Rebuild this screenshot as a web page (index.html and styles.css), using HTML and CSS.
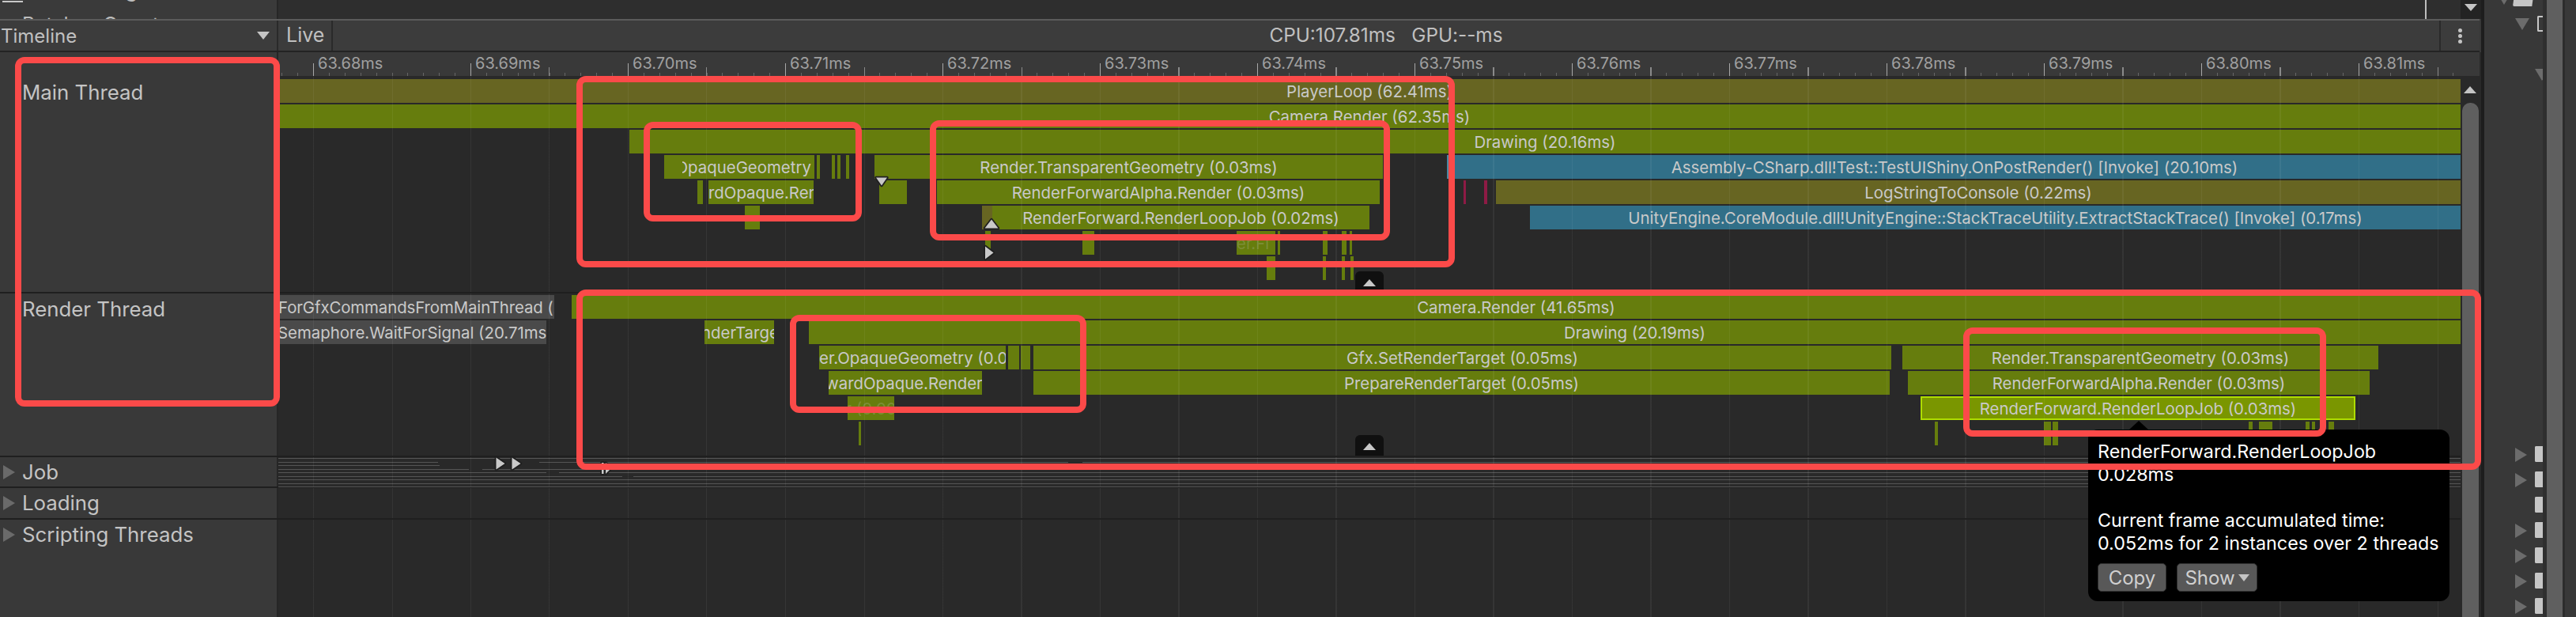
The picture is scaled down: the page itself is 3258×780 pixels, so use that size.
FILE: index.html
```html
<!DOCTYPE html>
<html lang="en">
<head>
<meta charset="utf-8">
<title>Profiler Timeline</title>
<link rel="stylesheet" href="styles.css">
</head>
<body>
<div class="app">
  <div class="editor">
    <div class="strip">
      <div class="strip-left">
        <div class="stat-row first"><span class="stat-icon"></span><span class="stat-name">Rendering</span></div>
        <div class="stat-row second"><span>Batches Count</span></div>
      </div>
      <div class="strip-graph"><span class="playhead"></span></div>
      <div class="strip-scroll"><span class="tri tri-down"></span></div>
    </div>
    <div class="toolbar">
      <div class="view-select"><span>Timeline</span><span class="tri tri-down"></span></div>
      <div class="live">Live</div>
      <div class="stats">CPU:107.81ms&nbsp;&nbsp;&nbsp;GPU:--ms</div>
      <div class="more"><i></i><i></i><i></i></div>
    </div>
    <div class="body">
      <div class="timeline">
        <div class="ruler-row">
          <div class="label-blank"></div>
          <div class="ruler">
            <span>63.68ms</span><span>63.69ms</span><span>63.70ms</span><span>63.71ms</span><span>63.72ms</span><span>63.73ms</span><span>63.74ms</span><span>63.75ms</span><span>63.76ms</span><span>63.77ms</span><span>63.78ms</span><span>63.79ms</span><span>63.80ms</span><span>63.81ms</span>
          </div>
        </div>

        <div class="section main-thread">
          <div class="label"><span>Main Thread</span></div>
          <div class="lanes">
            <div class="lane">
              <div class="bar o" style="left:0;width:2760px">PlayerLoop (62.41ms)</div>
            </div>
            <div class="lane">
              <div class="bar g" style="left:0;width:2760px">Camera.Render (62.35ms)</div>
            </div>
            <div class="lane">
              <div class="bar g" style="left:444px;width:2316px">Drawing (20.16ms)</div>
            </div>
            <div class="lane">
              <div class="bar g" style="left:488px;width:190px"><span class="cut" style="margin-left:18px;width:163px"><span style="margin-left:-8px">OpaqueGeometry</span></span></div>
              <div class="bar g" style="left:681px;width:4px"></div>
              <div class="bar g" style="left:700px;width:4px"></div>
              <div class="bar g" style="left:707px;width:4px"></div>
              <div class="bar g" style="left:718px;width:4px"></div>
              <div class="bar g" style="left:754px;width:643px">Render.TransparentGeometry (0.03ms)</div>
              <div class="bar b edge" style="left:1478px;width:1282px">Assembly-CSharp.dll!Test::TestUIShiny.OnPostRender() [Invoke] (20.10ms)</div>
            </div>
            <div class="lane">
              <div class="bar g" style="left:530px;width:7px"></div>
              <div class="bar g start" style="left:544px;width:133px">rdOpaque.Render</div>
              <div class="bar g" style="left:760px;width:35px"></div>
              <div class="bar g" style="left:833px;width:560px">RenderForwardAlpha.Render (0.03ms)</div>
              <div class="bar r" style="left:1499px;width:3px"></div>
              <div class="bar r" style="left:1525px;width:4px"></div>
              <div class="bar o" style="left:1540px;width:1220px">LogStringToConsole (0.22ms)</div>
            </div>
            <div class="lane">
              <div class="bar g" style="left:590px;width:19px"></div>
              <div class="bar o" style="left:890px;width:13px"></div>
              <div class="bar g" style="left:903px;width:477px">RenderForward.RenderLoopJob (0.02ms)</div>
              <div class="bar b" style="left:1583px;width:1177px">UnityEngine.CoreModule.dll!UnityEngine::StackTraceUtility.ExtractStackTrace() [Invoke] (0.17ms)</div>
            </div>
            <div class="lane">
              <div class="bar g" style="left:894px;width:7px"></div>
              <div class="bar g" style="left:1017px;width:15px"></div>
              <div class="bar g dim start" style="left:1212px;width:49px"><span>er.Fl</span></div>
              <div class="bar g" style="left:1264px;width:3px"></div>
              <div class="bar g" style="left:1321px;width:6px"></div>
              <div class="bar g" style="left:1345px;width:6px"></div>
              <div class="bar g" style="left:1355px;width:3px"></div>
            </div>
            <div class="lane">
              <div class="bar g" style="left:1250px;width:11px"></div>
              <div class="bar g" style="left:1321px;width:4px"></div>
              <div class="bar g" style="left:1345px;width:4px"></div>
              <div class="bar g" style="left:1356px;width:4px"></div>
            </div>
            <div class="expand"></div>
          </div>
        </div>

        <div class="section render-thread">
          <div class="label"><span>Render Thread</span></div>
          <div class="lanes">
            <div class="lane">
              <div class="bar k start tight" style="left:0;width:349px">ForGfxCommandsFromMainThread (20.71ms)</div>
              <div class="bar g" style="left:371px;width:2389px">Camera.Render (41.65ms)</div>
            </div>
            <div class="lane">
              <div class="bar k start" style="left:0;width:339px"><span class="nudge">Semaphore.WaitForSignal (20.71ms)</span></div>
              <div class="bar g start" style="left:539px;width:88px"><span class="shift">nderTarget</span></div>
              <div class="bar g" style="left:671px;width:2089px">Drawing (20.19ms)</div>
            </div>
            <div class="lane">
              <div class="bar g start" style="left:684px;width:236px">er.OpaqueGeometry (0.05ms)</div>
              <div class="bar g" style="left:923px;width:14px"></div>
              <div class="bar g" style="left:939px;width:12px"></div>
              <div class="bar g" style="left:955px;width:1085px">Gfx.SetRenderTarget (0.05ms)</div>
              <div class="bar g" style="left:2054px;width:602px">Render.TransparentGeometry (0.03ms)</div>
            </div>
            <div class="lane">
              <div class="bar g start" style="left:696px;width:194px"><span class="shift">wardOpaque.Render</span></div>
              <div class="bar g" style="left:955px;width:1083px">PrepareRenderTarget (0.05ms)</div>
              <div class="bar g" style="left:2061px;width:584px">RenderForwardAlpha.Render (0.03ms)</div>
            </div>
            <div class="lane">
              <div class="bar g dim" style="left:720px;width:59px"><span>r (0.00</span></div>
              <div class="bar hi" style="left:2077px;width:550px">RenderForward.RenderLoopJob (0.03ms)</div>
            </div>
            <div class="lane">
              <div class="bar g" style="left:734px;width:3px"></div>
              <div class="bar g" style="left:2095px;width:4px"></div>
              <div class="bar g" style="left:2233px;width:9px"></div>
              <div class="bar g" style="left:2244px;width:7px"></div>
              <div class="bar g" style="left:2492px;width:5px"></div>
              <div class="bar g" style="left:2505px;width:17px"></div>
              <div class="bar g" style="left:2564px;width:5px"></div>
              <div class="bar g" style="left:2572px;width:4px"></div>
              <div class="bar g" style="left:2593px;width:7px"></div>
            </div>
            <div class="expand"></div>
          </div>
        </div>

        <div class="section job">
          <div class="label fold"><i class="tri-right"></i><span>Job</span></div>
          <div class="lanes job-lines">
            <div class="job-line"></div>
            <div class="job-line"><i style="left:202px;width:128px"></i><i style="left:999px;width:18px"></i></div>
            <div class="job-line"><i style="left:204px;width:244px"></i></div>
            <div class="job-line"><i style="left:241px;width:17px"></i></div>
            <div class="job-line"><i style="left:339px;width:16px"></i></div>
            <div class="job-line"><i style="left:435px;width:14px"></i></div>
            <div class="job-line"></div>
            <div class="job-line"></div>
            <div class="job-line"></div>
          </div>
        </div>

        <div class="section loading">
          <div class="label fold"><i class="tri-right"></i><span>Loading</span></div>
          <div class="lanes"></div>
        </div>

        <div class="section scripting">
          <div class="label fold"><i class="tri-right"></i><span>Scripting Threads</span></div>
          <div class="lanes"></div>
        </div>
      </div>
      <div class="vscroll">
        <div class="vscroll-cap"></div>
        <div class="vscroll-arrow"><span class="tri tri-up"></span></div>
        <div class="thumb"></div>
      </div>
    </div>
  </div>

  <div class="gutter"></div>
  <div class="tree">
    <div class="tree-row d0"><i class="tree-tri down"></i><i class="folder"></i></div>
    <div class="tree-row d1"><i class="tree-tri down"></i><i class="doc"></i></div>
    <div class="tree-row"></div>
    <div class="tree-row d2"><i class="tree-tri down"></i></div>
    <div class="tree-space"></div>
    <div class="tree-row d1"><i class="tree-tri"></i><i class="doc solid"></i></div>
    <div class="tree-row d1"><i class="tree-tri"></i><i class="doc solid"></i></div>
    <div class="tree-row d1"><i class="tree-tri none"></i><i class="doc solid"></i></div>
    <div class="tree-row d1"><i class="tree-tri"></i><i class="doc solid"></i></div>
    <div class="tree-row d1"><i class="tree-tri"></i><i class="doc solid"></i></div>
    <div class="tree-row d1"><i class="tree-tri"></i><i class="doc solid"></i></div>
    <div class="tree-row d1"><i class="tree-tri"></i><i class="doc solid"></i></div>
  </div>
  <div class="tree-edge"></div>
  <div class="panel-scroll"></div>
  <div class="panel-rest"></div>

  <svg class="mark mark-down" style="left:1105px;top:222px" viewBox="0 0 20 15"><path d="M3 2.500H17L10 12.500Z"/></svg>
  <svg class="mark mark-up" style="left:1243px;top:275px" viewBox="0 0 22 16"><path d="M11 2.500L19.500 13.500H2.500Z"/></svg>
  <svg class="mark mark-right" style="left:1243px;top:309px" viewBox="0 0 16 21"><path d="M3 2.500L13.500 10.500L3 18.500Z"/></svg>
  <svg class="mark mark-job" style="left:625px;top:577px" viewBox="0 0 15 18"><path d="M2.500 1.500L13.500 9L2.500 16.500Z"/></svg>
  <svg class="mark mark-job" style="left:645px;top:577px" viewBox="0 0 15 18"><path d="M2.500 1.500L13.500 9L2.500 16.500Z"/></svg>
  <svg class="mark mark-pair" style="left:758px;top:582px" viewBox="0 0 17 20"><path d="M8 3L15 10L8 17Z"/><path d="M3 3H5.500V17H3Z"/></svg>

  <div class="tooltip">
    <i class="tooltip-arrow"></i>
    <div class="tooltip-text">RenderForward.RenderLoopJob<br>0.028ms<br><br>Current frame accumulated time:<br>0.052ms for 2 instances over 2 threads</div>
    <div class="tooltip-actions">
      <button class="tip-btn">Copy</button>
      <button class="tip-btn show">Show<span class="tri tri-down"></span></button>
    </div>
  </div>

  <div class="note note-labels"></div>
  <div class="note note-main"></div>
  <div class="note note-main-opaque"></div>
  <div class="note note-main-trans"></div>
  <div class="note note-render"></div>
  <div class="note note-render-opaque"></div>
  <div class="note note-render-trans"></div>
</div>
</body>
</html>
```

FILE: styles.css
```css
* { box-sizing: border-box; }
html, body { margin: 0; padding: 0; background: #383838; }
body { font-family: Inter, "Noto Sans", sans-serif; color: #c6c6c6; font-size: 25px; }

.app { position: relative; display: flex; width: 3258px; height: 780px; overflow: hidden; }
.editor { width: 3138px; height: 780px; display: flex; flex-direction: column; flex: none; }

.tri { display: block; width: 0; height: 0; border-style: solid; border-color: transparent; }
.tri-down { border-width: 9px 8px 0 8px; border-top-color: #c4c4c4; }
.tri-up { border-width: 0 8px 9px 8px; border-bottom-color: #c4c4c4; }

/* top strip */
.strip { height: 24px; display: flex; flex: none; overflow: hidden; }
.strip-left { width: 350px; background: #3a3a3a; flex: none; overflow: hidden; color: #bdbdbd; }
.stat-row { display: flex; height: 30px; line-height: 30px; white-space: nowrap; }
.stat-row.first { margin-top: -27px; }
.stat-row.second { margin-top: 13px; padding-left: 28px; }
.stat-icon { width: 26px; margin-left: 3px; border-bottom: 2px solid #c8c8c8; }
.stat-name { margin-left: 24px; }
.strip-graph { flex: 1; background: #2e2e2e; border-left: 2px solid #262626; position: relative; }
.playhead { position: absolute; left: 2715px; top: 0; bottom: 0; width: 2px; background: #bdbdbd; }
.strip-scroll { width: 26px; background: #232323; flex: none; display: flex; justify-content: center; padding-top: 5px; }

/* toolbar */
.toolbar { height: 42px; flex: none; display: flex; background: #3c3c3c; border-top: 2px solid #5b5b5b; border-bottom: 2px solid #232323; margin-right: 2px; }
.view-select { width: 350px; flex: none; display: flex; justify-content: space-between; align-items: center; padding: 0 9px 0 1px; color: #c0c0c0; font-size: 24px; }
.view-select .tri { border-width: 10px 8px 0 8px; }
.live { width: 71px; flex: none; border-left: 2px solid #2a2a2a; border-right: 2px solid #2a2a2a; padding-left: 10px; line-height: 36px; color: #c0c0c0; }
.stats { flex: 1; text-align: center; line-height: 36px; color: #c0c0c0; font-size: 24.300px; }
.more { width: 51px; flex: none; border-left: 2px solid #2a2a2a; display: flex; flex-direction: column; align-items: center; justify-content: center; gap: 2px; }
.more i { width: 5px; height: 5px; border-radius: 50%; background: #c4c4c4; }

/* body */
.body { flex: 1; display: flex; min-height: 0; }
.timeline { width: 3112px; flex: none; display: flex; flex-direction: column; }
.ruler-row { height: 30px; flex: none; display: flex; }
.label-blank { width: 352px; flex: none; background: #393939; border-right: 2px solid #262626; }
.ruler {
  flex: 1; display: flex; padding-left: 50px; background-color: #393939; border-right: 2px solid #262626;
  background-image:
    repeating-linear-gradient(to right, #a8a8a8 44px 45px, transparent 45px 243px),
    repeating-linear-gradient(to right, #8a8a8a 143.5px 144.5px, transparent 144.5px 342.5px),
    repeating-linear-gradient(to right, #666 4.200px 5.200px, transparent 5.200px 24.100px);
  background-size: 100% 16px, 100% 11px, 100% 4px;
  background-position: 0 100%, 0 100%, 0 100%;
  background-repeat: no-repeat;
  font-size: 20px; color: #a0a0a0; line-height: 30px;
}
.ruler span { width: 199px; flex: none; height: 26px; line-height: 28px; }

.section { display: flex; flex: none; border-bottom: 2px solid #1f1f1f; }
.main-thread { height: 275px; }
.render-thread { height: 207px; }
.job { height: 39px; }
.loading { height: 40px; }
.scripting { flex: 1; border-bottom: 0; }
.label { width: 352px; flex: none; background: #393939; border-right: 2px solid #262626; padding-left: 28px; color: #c4c4c4; position: relative; font-size: 25.800px; }
.main-thread .label span { display: block; margin-top: 6px; line-height: 30px; }
.render-thread .label span { display: block; margin-top: 5px; line-height: 30px; }
.fold span { display: block; line-height: 38px; }
.tri-right { position: absolute; left: 4px; top: 10px; width: 0; height: 0; border-style: solid; border-color: transparent transparent transparent #6a6a6a; border-width: 9px 0 9px 15px; }

.lanes { position: relative; flex: 1; background: #292929; display: flex; flex-direction: column; gap: 2px; }
.lanes::after {
  content: ""; position: absolute; inset: 0; pointer-events: none;
  background-image: repeating-linear-gradient(to right, rgba(255,255,255,.055) 44px 45px, transparent 45px 143.500px);
}
.main-thread .lanes { padding-top: 4px; }
.render-thread .lanes { padding-top: 2px; }
.lane { position: relative; height: 30px; flex: none; }

.bar { position: absolute; top: 0; bottom: 0; display: flex; align-items: center; justify-content: center; overflow: hidden; white-space: nowrap; font-size: 20.400px; color: #c9c9c9; }
.bar.start { justify-content: flex-start; }
.g { background: #667d0d; }
.o { background: #676522; }
.b { background: #316f88; }
.r { background: #8e1b45; }
.k { background: #4a4a4a; }
.edge { border-left: 2px solid #4a87a0; }
.hi { background: #7a9600; border: 2px solid #aedc00; }
.dim { color: rgba(205,205,205,.22); }
.tight { letter-spacing: -.1px; }
.cut { display: block; overflow: hidden; flex: none; align-self: center; }
.cut span { display: block; }
.shift { margin-left: -4px; }
.nudge { margin-left: -1px; }

.expand { position: absolute; left: 1362px; bottom: 0; width: 36px; height: 26px; background: #101010; border-radius: 6px 6px 0 0; }
.expand::after { content: ""; position: absolute; left: 10px; top: 10px; border-style: solid; border-color: transparent transparent #c8c8c8 transparent; border-width: 0 8px 9px 8px; }

/* job lines */
.job-lines { gap: 3.500px; padding-top: 1px; }
.job-line { position: relative; height: 1px; background: #555; flex: none; }
.job-line i { position: absolute; top: 0; height: 1px; background: #292929; }

/* scrollbar */
.vscroll { width: 26px; flex: none; background: #292929; position: relative; }
.vscroll-cap { height: 30px; width: 24px; background: #393939; }
.vscroll-arrow { height: 34px; display: flex; justify-content: center; padding-top: 13px; padding-right: 2px; }
.thumb { width: 21px; margin-left: 2px; height: 700px; border-radius: 10px 10px 0 0; background: #5f5f5f; }

/* right side */
.gutter { width: 4px; flex: none; background: #1d1d1d; }
.tree { width: 74px; flex: none; background: #383838; height: 780px; overflow: hidden; }
.tree-row { height: 32px; display: flex; align-items: flex-start; position: relative; }
.tree-row:first-child { margin-top: -12px; }
.tree-space { height: 448px; }
.tree-row.d0 { padding-left: 16px; }
.tree-row.d1 { padding-left: 39px; }
.tree-row.d2 { padding-left: 64px; }
.tree-tri { display: block; width: 0; height: 0; flex: none; margin-top: 2px; border-style: solid; border-color: transparent transparent transparent #6c6c6c; border-width: 9px 0 9px 15px; }
.tree-tri.down { border-color: #6c6c6c transparent transparent transparent; border-width: 15px 9px 0 9px; margin-top: 3px; }
.tree-tri.none { visibility: hidden; }
.doc { display: block; width: 14px; height: 20px; margin-left: 10px; border: 2px solid #c6c6c6; border-right: 0; border-radius: 2px 0 0 2px; background: #383838; flex: none; }
.doc.solid { background: #c6c6c6; }
.folder { display: block; width: 27px; height: 20px; margin-left: 2px; background: #c6c6c6; border-radius: 2px; clip-path: polygon(10% 0, 100% 0, 90% 100%, 0 100%); flex: none; }
.tree-edge { width: 5px; flex: none; background: #2f2f2f; }
.panel-scroll { width: 20px; flex: none; background: #5f5f5f; }
.panel-rest { flex: 1; background: #383838; border-left: 3px solid #2c2c2c; }

/* markers */
.mark { position: absolute; overflow: visible; }
.mark path { fill: #c9c9c9; stroke: #1f1f1f; stroke-width: 3.500px; stroke-linejoin: round; paint-order: stroke; }
.mark-down { width: 20px; height: 15px; }
.mark-up { width: 22px; height: 16px; }
.mark-right { width: 16px; height: 21px; }
.mark-job { width: 15px; height: 18px; }
.mark-pair { width: 17px; height: 20px; }

/* tooltip */
.tooltip { position: absolute; left: 2641px; top: 543px; width: 457px; height: 217px; background: #000; border-radius: 12px; padding: 13px 12px 0; color: #fff; }
.tooltip-arrow { position: absolute; left: 52px; top: -11px; border-style: solid; border-color: transparent transparent #000 transparent; border-width: 0 12px 11px 12px; }
.tooltip-text { font-size: 23.300px; line-height: 29px; white-space: nowrap; }
.tooltip-actions { display: flex; gap: 13px; margin-top: 11px; }
.tip-btn { font: inherit; font-size: 24px; color: #d0d0d0; height: 36px; padding: 0; width: 87px; background: #585858; border: 1px solid #303030; border-radius: 5px; display: flex; align-items: center; justify-content: center; gap: 4px; }
.tip-btn.show { width: 102px; }
.tip-btn .tri { border-width: 9px 7px 0 7px; border-top-color: #c4c4c4; }

/* annotation rectangles */
.note { position: absolute; border: 8px solid #fb4a49; border-radius: 12px; pointer-events: none; }
.note-labels { left: 19px; top: 72px; width: 335px; height: 442px; }
.note-main { left: 729px; top: 96px; width: 1111px; height: 242px; }
.note-main-opaque { left: 814px; top: 154px; width: 276px; height: 126px; }
.note-main-trans { left: 1176px; top: 152px; width: 582px; height: 152px; }
.note-render { left: 729px; top: 366px; width: 2409px; height: 228px; }
.note-render-opaque { left: 999px; top: 398px; width: 375px; height: 124px; }
.note-render-trans { left: 2483px; top: 414px; width: 459px; height: 138px; }
```
